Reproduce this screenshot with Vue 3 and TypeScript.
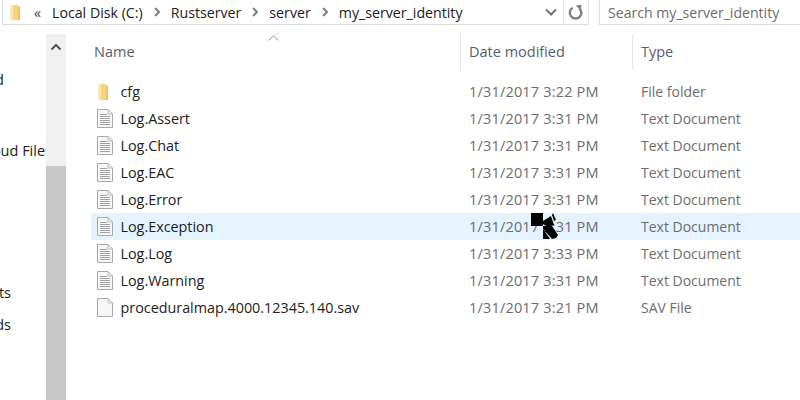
<template>
  <div class="window">
    <div class="toolbar">
      <div class="address">
        <svg class="addr-folder" width="12" height="17" viewBox="0 0 12 17">
          <path d="M1 1h7l3 2v13H1z" fill="#f6d57f" />
          <path d="M1 1h3v15H1z" fill="#fbe9b4" />
          <path d="M9 3h2v13H9z" fill="#eec45e" />
        </svg>
        <span class="overflow">«</span>
        <template v-for="(part, index) in crumbs" :key="part">
          <svg v-if="index > 0" class="crumb-arrow" width="6" height="10" viewBox="0 0 6 10">
            <path d="M1 1l4 4-4 4" fill="none" stroke="#808080" stroke-width="2" />
          </svg>
          <span class="crumb">{{ part }}</span>
        </template>
        <svg class="dropdown" width="12" height="8" viewBox="0 0 12 8">
          <path d="M1 1.500l5 5 5-5" fill="none" stroke="#707070" stroke-width="2" />
        </svg>
        <div class="refresh">
          <svg width="16" height="17" viewBox="0 0 16 17">
            <path d="M11.200 4.200A5.800 5.800 0 1 1 4.600 3.800" fill="none" stroke="#808080" stroke-width="2.400" />
            <path d="M7.800 1.400l5.600-.6-.4 5.800z" fill="#808080" />
          </svg>
        </div>
      </div>
      <div class="search">Search my_server_identity</div>
    </div>

    <div class="body">
      <div class="nav">
        <div v-for="item in navItems" :key="item.label" class="nav-item" :class="item.cls">
          {{ item.label }}
        </div>
      </div>

      <div class="scrollbar">
        <div class="scroll-track">
          <svg width="12" height="8" viewBox="0 0 12 8">
            <path d="M1.500 6.500L6 2l4.500 4.500" fill="none" stroke="#555" stroke-width="2" />
          </svg>
        </div>
        <div class="scroll-thumb"></div>
      </div>

      <div class="list">
        <svg class="sort-caret" width="11" height="6" viewBox="0 0 11 6">
          <path d="M0.500 5.500L5.500 0.800l5 4.700" fill="none" stroke="#9a9a9a" />
        </svg>
        <div class="header">
          <div class="head-name">Name</div>
          <div class="head-cell">Date modified</div>
          <div class="head-cell">Type</div>
        </div>
        <div
          v-for="file in files"
          :key="file.name"
          class="row"
          :class="{ hovered: file.name === 'Log.Exception' }"
        >
          <div class="name">
            <span class="icon">
              <svg v-if="file.kind === 'folder'" width="12" height="18" viewBox="0 0 12 18">
                <path d="M1 1h7l3 2v14H1z" fill="#f6d57f" />
                <path d="M1 1h3v16H1z" fill="#fbe9b4" />
                <path d="M9 3h2v14H9z" fill="#eec45e" />
              </svg>
              <svg v-else width="16" height="19" viewBox="0 0 16 19">
                <path d="M0.500 0.500h10.500l4.500 4.500v13.500H0.500z" fill="#f7f7f7" stroke="#a8a8a8" />
                <path d="M11 0.500v4.500h4.500" fill="none" stroke="#bdbdbd" />
                <path
                  v-if="file.kind === 'text'"
                  d="M3 5.500h7M3 7.500h10M3 9.500h10M3 11.500h10M3 13.500h10M3 15.500h10"
                  stroke="#a3a3a3"
                />
              </svg>
            </span>
            {{ file.name }}
          </div>
          <div class="date">{{ file.date }}</div>
          <div class="type">{{ file.type }}</div>
        </div>
      </div>
    </div>

    <svg class="cursor" width="30" height="30" viewBox="0 0 30 30">
      <path d="M1 1h12v13H1z" fill="#000" />
      <path d="M13 9l8-5 3 9-6 2-5-3z" fill="#000" />
      <path d="M13 14h9l6 9-2 3-4 1-9-10z" fill="#000" />
      <path d="M13 17l7 10h-7z" fill="#000" />
      <path d="M23 1l3 7-2 1-2-6z" fill="#000" />
    </svg>
  </div>
</template>

<script setup lang="ts">
type FileKind = 'folder' | 'text' | 'blank'

interface FileRow {
  name: string
  date: string
  type: string
  kind: FileKind
}

const crumbs = ['Local Disk (C:)', 'Rustserver', 'server', 'my_server_identity']

const navItems = [
  { label: 'Pinned', cls: 'nav-a' },
  { label: 'Cloud Files', cls: 'nav-b' },
  { label: 'Documents', cls: 'nav-c' },
  { label: 'Downloads', cls: 'nav-d' },
]

const log = (name: string, time = '3:31 PM'): FileRow => ({
  name,
  date: `1/31/2017 ${time}`,
  type: 'Text Document',
  kind: 'text',
})

const files: FileRow[] = [
  { name: 'cfg', date: '1/31/2017 3:22 PM', type: 'File folder', kind: 'folder' },
  log('Log.Assert'),
  log('Log.Chat'),
  log('Log.EAC'),
  log('Log.Error'),
  log('Log.Exception'),
  log('Log.Log', '3:33 PM'),
  log('Log.Warning'),
  {
    name: 'proceduralmap.4000.12345.140.sav',
    date: '1/31/2017 3:21 PM',
    type: 'SAV File',
    kind: 'blank',
  },
]
</script>

<style>
html,
body {
  margin: 0;
  background: #fff;
}
</style>

<style scoped>
.window {
  position: relative;
  width: 800px;
  height: 400px;
  overflow: hidden;
  display: flex;
  flex-direction: column;
  background: #fff;
  font-family: "Open Sans", "Noto Sans", sans-serif;
  font-size: 14.5px;
  color: #222;
}

.toolbar {
  display: flex;
  height: 25px;
  flex-shrink: 0;
  gap: 10px;
}

.address {
  width: 587px;
  margin-left: 2px;
  box-sizing: border-box;
  display: flex;
  align-items: center;
  border: 1px solid #dcdcdc;
  border-top: 0;
  padding-left: 6px;
  font-size: 14.2px;
}

.addr-folder {
  margin-right: 13px;
}

.overflow {
  width: 18px;
  color: #444;
}

.crumb-arrow {
  margin: 0 11px 0 11px;
}

.dropdown {
  margin-left: auto;
  margin-right: 6px;
}

.refresh {
  width: 24px;
  height: 100%;
  display: flex;
  align-items: center;
  justify-content: center;
  border-left: 1px solid #dcdcdc;
}

.search {
  flex: 1;
  display: flex;
  align-items: center;
  padding-left: 8px;
  border: 1px solid #dcdcdc;
  border-top: 0;
  border-right: 0;
  color: #6d6d6d;
  font-size: 14.1px;
}

.body {
  flex: 1;
  display: flex;
  min-height: 0;
}

.nav {
  width: 46px;
  flex-shrink: 0;
  overflow: hidden;
  padding-top: 44px;
  box-sizing: border-box;
}

.nav-item {
  height: 22px;
  line-height: 22px;
  display: flex;
  justify-content: flex-end;
  white-space: nowrap;
}

.nav-a {
  width: 4px;
}

.nav-b {
  width: 52px;
  margin-top: 49px;
}

.nav-c {
  width: 11px;
  margin-top: 120px;
}

.nav-d {
  width: 11px;
  margin-top: 10px;
}

.scrollbar {
  width: 20px;
  flex-shrink: 0;
  margin-top: 9px;
  display: flex;
  flex-direction: column;
  background: #f0f0f0;
}

.scroll-track {
  height: 132px;
  display: flex;
  justify-content: center;
  padding-top: 9px;
  box-sizing: border-box;
}

.scroll-thumb {
  flex: 1;
  background: #c8c8c8;
}

.list {
  position: relative;
  flex: 1;
  padding-left: 25px;
}

.sort-caret {
  position: absolute;
  left: 202px;
  top: 10px;
}

.header {
  display: grid;
  grid-template-columns: 369px 172px 1fr;
  height: 34px;
  margin-top: 9px;
  margin-bottom: 10px;
  color: #56606c;
}

.head-name {
  padding-left: 3px;
  line-height: 36px;
}

.head-cell {
  border-left: 1px solid #e5e5e5;
  padding-left: 8px;
  line-height: 36px;
}

.row {
  display: grid;
  grid-template-columns: 369px 172px 1fr;
  height: 27px;
  line-height: 27px;
}

.row.hovered {
  background: #e5f3ff;
}

.name {
  display: flex;
  align-items: center;
  white-space: nowrap;
  font-size: 14.350px;
}

.icon {
  width: 29.500px;
  padding-left: 6px;
  box-sizing: border-box;
  display: flex;
  align-items: center;
}

.date,
.type {
  padding-left: 9px;
  color: #6d6d6d;
}

.date {
  letter-spacing: 0.18px;
}

.type {
  font-size: 14px;
}

.cursor {
  position: absolute;
  left: 530px;
  top: 212px;
}
</style>
